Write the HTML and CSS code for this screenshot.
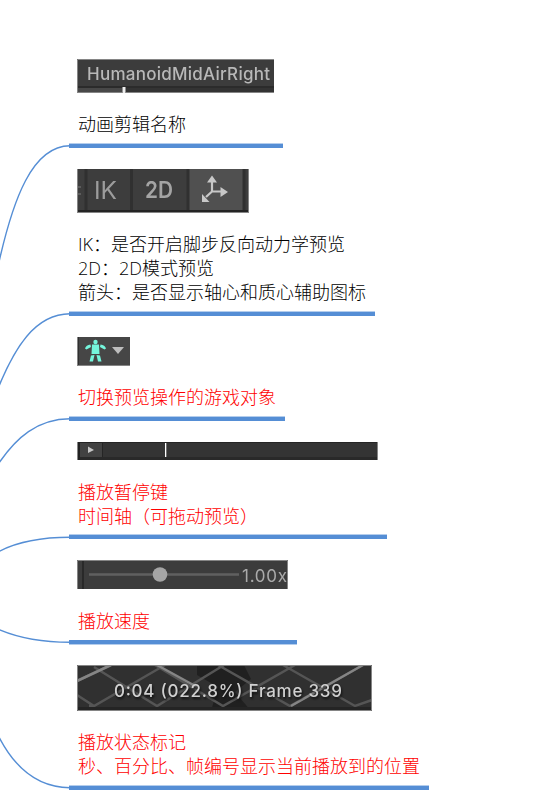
FILE: index.html
```html
<!DOCTYPE html>
<html lang="zh-CN">
<head>
  <meta charset="UTF-8" />
  <title>动画预览窗口</title>
  <link rel="stylesheet" href="styles.css">
</head>
<body>
  <!-- branch lines -->
  <svg class="branches" width="70" height="808" viewBox="0 0 70 808">
    <path d="M-1 262C13 200 32 146 70 145.8" />
    <path d="M-1 386C14 350 34 314 70 313.8" />
    <path d="M-1 463C16 438 37 419 70 418.8" />
    <path d="M-1 551.5C19 541 44 537.3 70 537.3" />
    <path d="M-1 629.5C19 638 44 642.2 70 642.2" />
    <path d="M-1 737C15 768 38 787.5 70 787.7" />
  </svg>

  <main class="topics">
    <section class="topic clip-name">
      <svg class="thumb" width="197" height="34" viewBox="0 0 197 34">
        <rect width="197" height="34" fill="#3c3c3c" />
        <rect y="27" width="197" height="2" fill="#2b2b2b" />
        <rect y="29" width="45" height="4" fill="#484848" />
        <rect x="48" y="29" width="149" height="4" fill="#333" />
        <rect x="45.500" y="28" width="3" height="6" fill="#eee" />
        <path class="edge" d="M.5 34V.5H197M0 33.500H45M49 33.500H197" />
        <text class="soft" x="10" y="20.500" font-size="17" font-weight="500" fill="#b8b8b8" textLength="183">HumanoidMidAirRight</text>
      </svg>
      <p>动画剪辑名称</p>
    </section>

    <section class="topic toggles">
      <svg class="thumb" width="172" height="44" viewBox="0 0 172 44">
        <rect width="172" height="44" fill="#3d3d3d" />
        <rect x="112" width="54" height="42" fill="#505050" />
        <path d="M9 0V42M54.500 0V42M111 0V42M167 0V42" stroke="#303030" stroke-width="3" />
        <rect y="41" width="172" height="2" fill="#242424" />
        <path d="M1 18H4M1 25H4" stroke="#5c5c5c" stroke-width="2" />
        <path class="edge" d="M.5 0V44M0 43.500H172M171.500 0V44" />
        <g class="soft" font-size="24" fill="#9c9c9c">
          <text x="17" y="29.500" textLength="23" lengthAdjust="spacingAndGlyphs">IK</text>
          <text x="68" y="28.500" font-size="23" font-weight="600" fill="#a4a4a4" textLength="28" lengthAdjust="spacingAndGlyphs">2D</text>
        </g>
        <g class="soft" fill="#c8c8c8">
          <path d="M135 12V22.500H144M135 22.500L129 28" fill="none" stroke="#c8c8c8" stroke-width="2.200" />
          <path d="M135 6.500L140 13.500H130ZM151 23L143.500 28V18ZM125 33V25L132.500 33Z" />
        </g>
      </svg>
      <p>IK：是否开启脚步反向动力学预览<br>2D：2D模式预览<br>箭头：是否显示轴心和质心辅助图标</p>
    </section>

    <section class="topic avatar important">
      <svg class="thumb" width="53" height="29" viewBox="0 0 53 29">
        <rect width="53" height="29" fill="#464646" />
        <rect x="1" width="1" height="29" fill="#303030" />
        <path class="edge" d="M.5 0V29M0 28.500H53" />
        <g class="softer" fill="#75f5dc">
          <circle cx="18.500" cy="5" r="2.200" />
          <path d="M15 7.500H22L22.500 17H14.500ZM13.500 7.500L14 10L9.500 12.500L8 11.500Q9 8 13.500 7.500ZM23.500 7.500L23 10L27.500 12.500L29 11.500Q28 8 23.500 7.500ZM14 18.500L17.500 18L16 24.500H12.500ZM19.500 18L23 18.500L24.500 24.500H21Z" />
        </g>
        <path class="softer" d="M35 10H47L41 17Z" fill="#bdbdbd" />
      </svg>
      <p>切换预览操作的游戏对象</p>
    </section>

    <section class="topic timeline important">
      <svg class="thumb" width="301" height="18" viewBox="0 0 301 18">
        <rect width="301" height="18" fill="#343434" />
        <rect y="15" width="301" height="3" fill="#292929" />
        <rect x="3" y="1" width="22" height="14" fill="#424242" />
        <path d="M.5 .5H301M25.500 0V15" stroke="#252525" />
        <path d="M2 0V18" stroke="#222" stroke-width="2" />
        <path d="M11 4.500L17 8L11 11Z" fill="#c6c6c6" />
        <rect x="88" y="1" width="1.300" height="14" fill="#fff" />
        <path class="edge" d="M.5 0V18M300.500 0V18" />
      </svg>
      <p>播放暂停键<br>时间轴（可拖动预览）</p>
    </section>

    <section class="topic speed important">
      <svg class="thumb" width="211" height="29" viewBox="0 0 211 29">
        <rect width="211" height="29" fill="#3c3c3c" />
        <rect x="5" width="2" height="29" fill="#292929" />
        <path class="edge" d="M.5 29V.5H210.500V29" />
        <g class="soft">
          <path d="M12 14.500H162" stroke="#606060" stroke-width="2.500" />
          <circle cx="83" cy="14.500" r="7.300" fill="#a5a5a5" />
          <text x="165" y="21.500" font-size="17" fill="#aaa" textLength="45">1.00x</text>
        </g>
      </svg>
      <p>播放速度</p>
    </section>

    <section class="topic frame important">
      <svg class="thumb" width="295" height="46" viewBox="0 0 295 46">
        <rect width="295" height="46" fill="#303030" />
        <path d="M120 0H167L174 14L158 27L174 46H134L141 22L120 10Z" fill="#202020" />
        <g class="soft" fill="none" stroke="#666" stroke-width="2.500">
          <path d="M0 16L34 0M78 0L146 41L218 0M206 0L278 41L295 35M0 30L17 41L88 0M12 41L17 41M141 0L213 41L286 0M147 0L80 41L17 2" stroke="#555" />
          <path d="M0 16L34 0M80 0L120 22M214 41L286 0" stroke="#858585" />
        </g>
        <rect y="42" width="295" height="3" fill="#242424" />
        <path class="edge" d="M.5 .5H294.500V45.500H.5Z" />
        <text class="soft shadowed" x="37" y="31.500" font-size="17" font-weight="500" fill="#d0d0d0" textLength="228">0:04 (022.8%) Frame 339</text>
      </svg>
      <p>播放状态标记<br>秒、百分比、帧编号显示当前播放到的位置</p>
    </section>
  </main>
</body>
</html>
```
FILE: styles.css
```css
body {
  margin: 0; background: #fff; color: #000;
  font-family: "Open Sans", "Noto Sans CJK SC", sans-serif;
}
.branches { position: absolute; left: 0; top: 0; }
.branches path { fill: none; stroke: #558ed5; stroke-width: 1.4; }

.topics {
  display: flex; flex-direction: column; align-items: flex-start; gap: 21px;
  padding: 59px 0 0 69px;
}
.topic {
  box-sizing: border-box; padding: 0 0 8px 8px;
  border-bottom: 4px solid #558ed5;
  box-shadow: inset 0 -1px #b4cdec;
}
.topic p {
  margin: 19px 0 0 1px;
  font-size: 18px; line-height: 24px; font-weight: 300; white-space: nowrap;
}
.important p { color: #f00; }

.clip-name { width: 214px; }
.toggles { width: 306px; }
.avatar { width: 216px; }
.timeline { width: 318px; padding-bottom: 7px; }
.timeline p { margin-top: 20px; }
.speed { width: 228px; padding-bottom: 7px; box-shadow: 0 1px #b4cdec; }
.speed p { margin-top: 20px; }
.frame { width: 360px; }

/* thumbnails */
.thumb { display: block; font-family: Inter, sans-serif; }
.edge { fill: none; stroke: #858585; stroke-width: 1; }
.soft { filter: blur(0.6px); }
.softer { filter: blur(0.4px); }
.shadowed { filter: blur(0.5px) drop-shadow(1px 2px 1px #111); }
```
